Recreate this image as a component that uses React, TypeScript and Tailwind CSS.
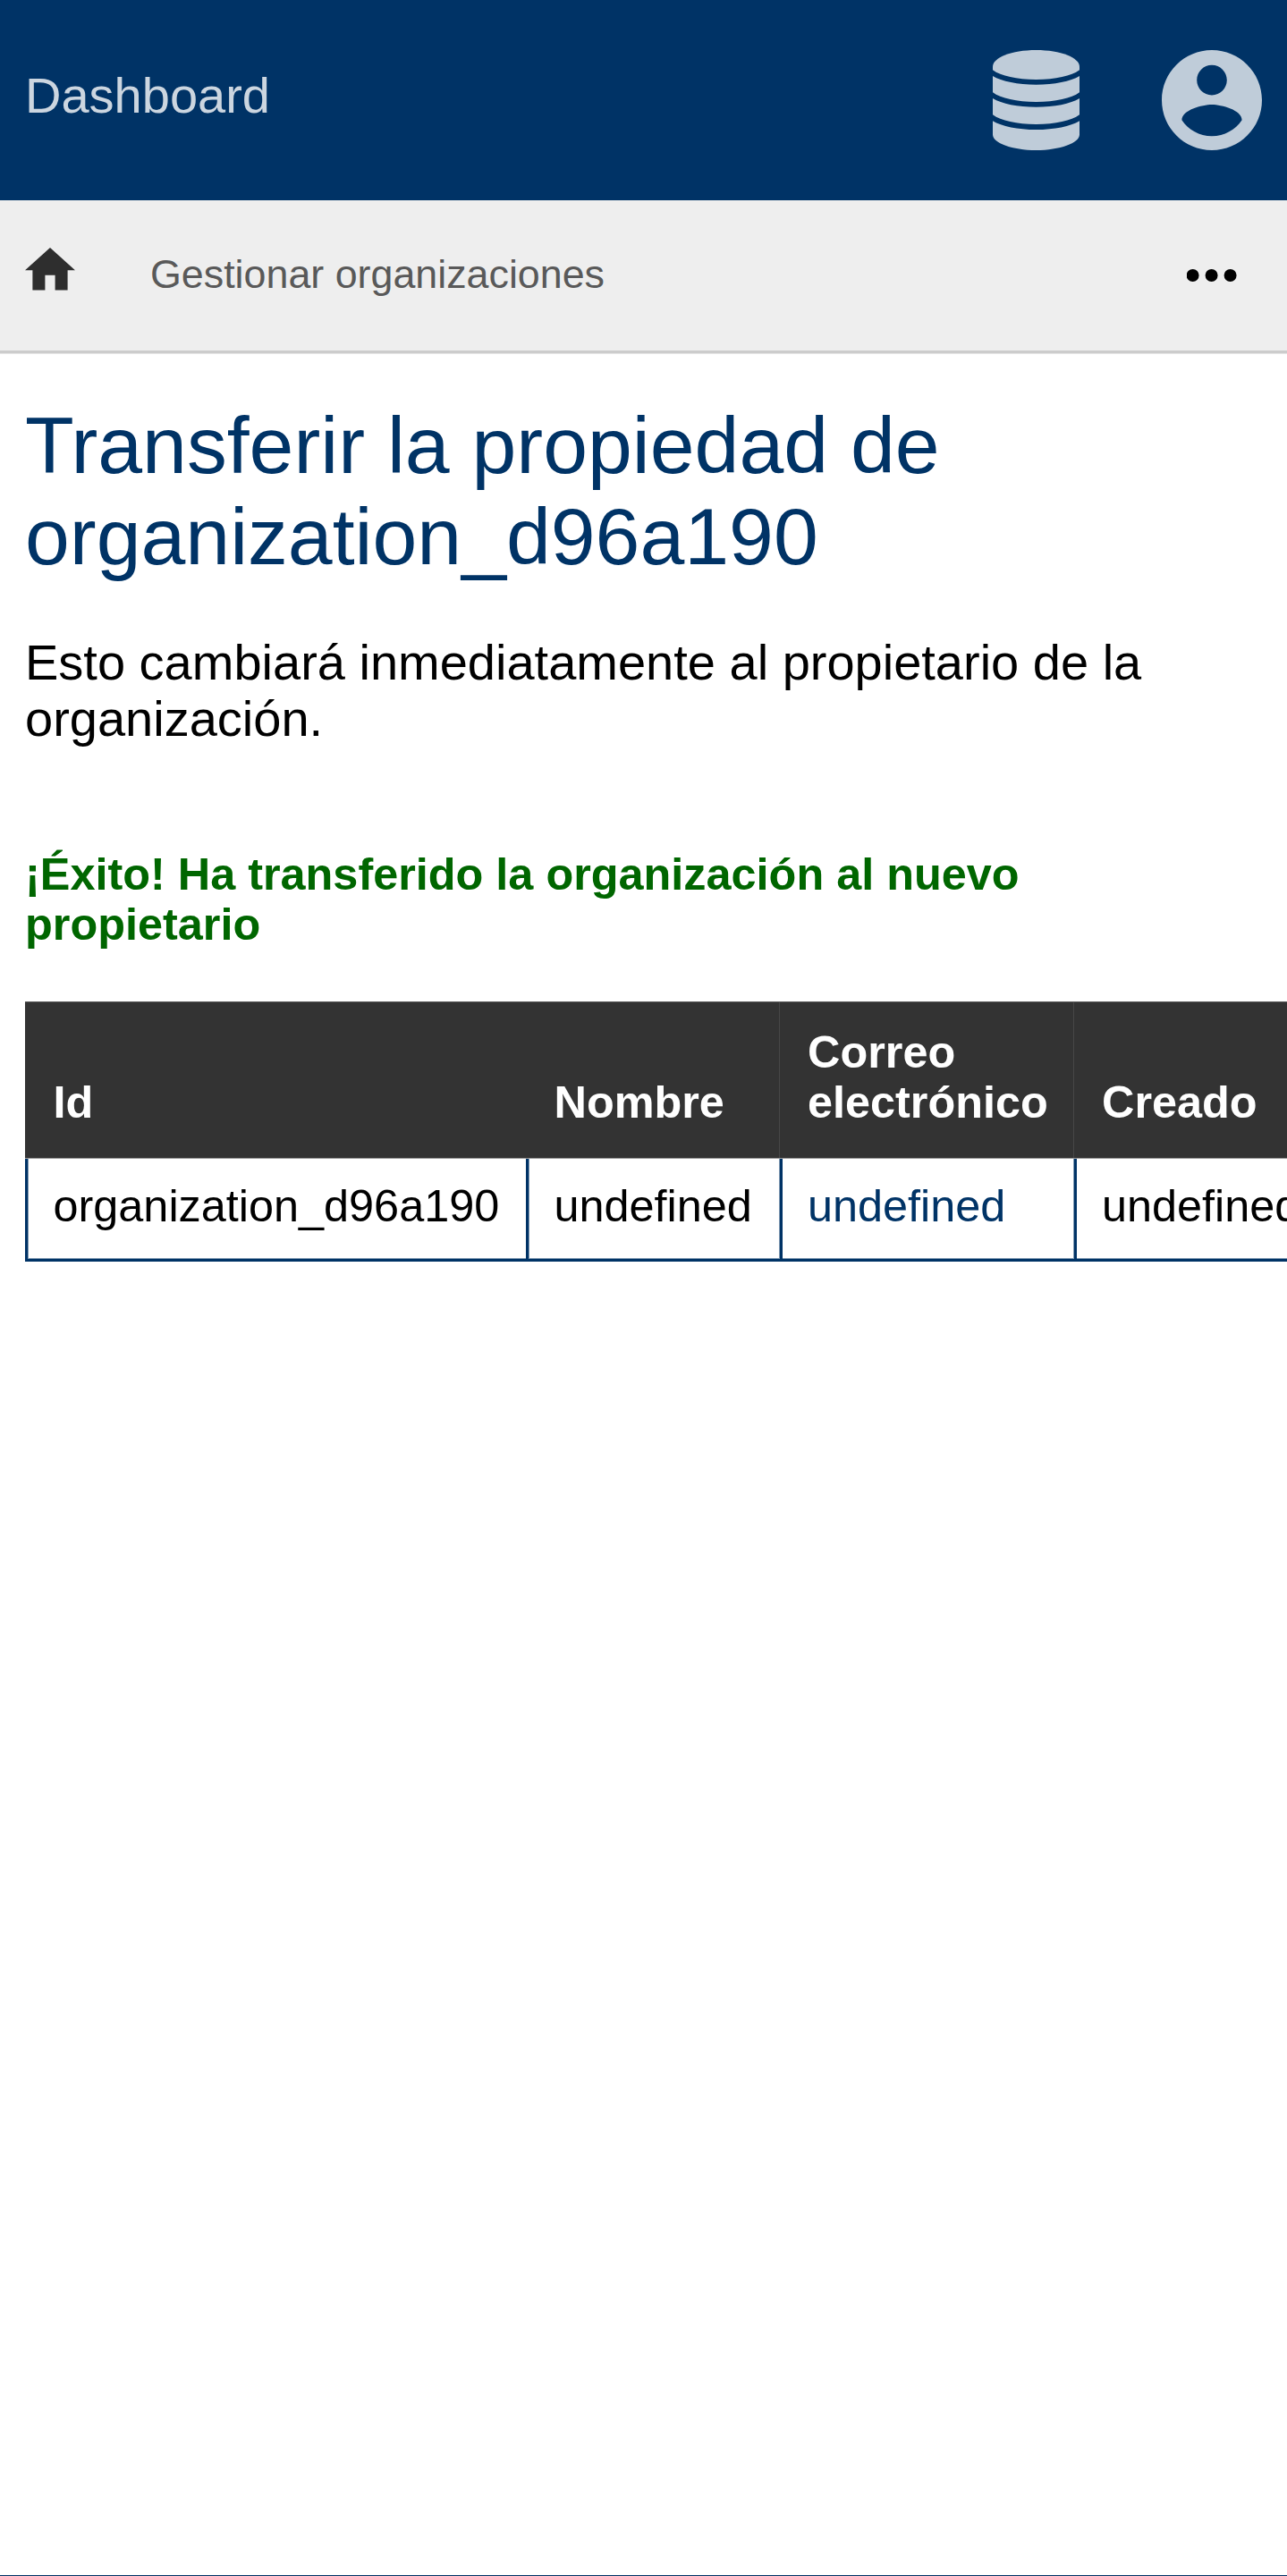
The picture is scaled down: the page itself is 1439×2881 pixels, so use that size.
const columns = [
  {
    title: "Id",
    value: "organization_d96a190",
    th: "shadow-[inset_0_1px_0_#5b5b5b,inset_0_-1px_0_#999999] pl-[31.5px]",
    td: "shadow-[inset_0_-3px_0_#003366,inset_3px_0_0_#003366,inset_0_-4px_0_#7f99b2,inset_4px_0_0_#7f99b2] pl-[31.5px]",
  },
  {
    title: "Nombre",
    value: "undefined",
    th: "shadow-[inset_0_1px_0_#5b5b5b,inset_0_-1px_0_#999999] pl-[31.5px]",
    td: "shadow-[inset_0_-3px_0_#003366,inset_3px_0_0_#003366,inset_0_-4px_0_#7f99b2,inset_4px_0_0_#7f99b2] pl-[31.5px]",
  },
  {
    title: "Correo electrónico",
    value: "undefined",
    th: "shadow-[inset_0_1px_0_#5b5b5b,inset_0_-1px_0_#999999,inset_1px_0_0_#474747] pl-[32px]",
    td: "shadow-[inset_0_-3px_0_#003366,inset_1px_0_0_#7f99b2,inset_4px_0_0_#003366,inset_0_-4px_0_#7f99b2] pl-[32px] text-[#003366]",
  },
  {
    title: "Creado",
    value: "undefined",
    th: "shadow-[inset_0_1px_0_#5b5b5b,inset_0_-1px_0_#999999,inset_1px_0_0_#474747] pl-[32px]",
    td: "shadow-[inset_0_-3px_0_#003366,inset_1px_0_0_#7f99b2,inset_4px_0_0_#003366,inset_0_-4px_0_#7f99b2] pl-[32px]",
  },
];

function DatabaseIcon() {
  return (
    <svg className="h-[112px] w-[97px]" viewBox="0 0 97 112" fill="currentColor">
      <path d="M0 18.5C0 8.5 21 0 48.5 0S97 8.5 97 18.5V22.3C88 29 70 33 48.5 33S9 29 0 22.3Z" />
      <path d="M0 29C10 35 28 38.7 48.5 38.7S87 35 97 29V47.3C88 54 70 58 48.5 58S9 54 0 47.3Z" />
      <path d="M0 54C10 60 28 63.8 48.5 63.8S87 60 97 54V72.3C88 79 70 83 48.5 83S9 79 0 72.3Z" />
      <path d="M0 79.2C10 85.2 28 89 48.5 89S87 85.2 97 79.2V94.5C97 104 75 112 48.5 112S0 104 0 94.5Z" />
    </svg>
  );
}

function AccountIcon() {
  return (
    <svg className="size-[112px]" viewBox="2 2 20 20" fill="currentColor">
      <path d="M12 2C6.48 2 2 6.48 2 12s4.48 10 10 10 10-4.48 10-10S17.52 2 12 2zm0 3c1.66 0 3 1.34 3 3s-1.34 3-3 3-3-1.34-3-3 1.34-3 3-3zm0 14.2c-2.5 0-4.71-1.28-6-3.22.03-1.99 4-3.08 6-3.08 1.99 0 5.97 1.09 6 3.08-1.29 1.94-3.5 3.22-6 3.22z" />
    </svg>
  );
}

export default function App() {
  return (
    <div className="flex h-[2881px] w-full flex-col overflow-hidden border-b border-[#003366] bg-white font-['Liberation_Sans',Arial,sans-serif] text-black">
      <header className="flex h-[224px] shrink-0 items-center justify-between bg-[#003366] pr-[28.5px] pl-7">
        <a className="-mt-[11px] text-[56px] leading-[63px] text-[#ccd6e0]">Dashboard</a>
        <div className="flex gap-[92px] text-[#bfccd9]">
          <DatabaseIcon />
          <AccountIcon />
        </div>
      </header>

      <nav className="flex h-[168px] shrink-0 items-start bg-[#eeeeee] pt-[53px] pl-7">
        <svg className="h-[48px] w-[56px]" viewBox="2 3 20 17.143" fill="#2e2e2e">
          <path d="M10 20v-6h4v6h5v-8h3L12 3 2 12h3v8z" />
        </svg>
        <a className="ml-[84px] pt-[3px] text-[44.8px] leading-[52px] text-[#595959]">Gestionar organizaciones</a>
        <svg className="mt-[24px] mr-[56px] ml-auto h-[14px] w-[56px]" viewBox="0.4 0 56 14">
          <circle cx="7" cy="7" r="7" />
          <circle cx="28" cy="7" r="7" />
          <circle cx="49" cy="7" r="7" />
        </svg>
      </nav>
      <div className="h-[4px] shrink-0 border-b border-[#e5e5e5] bg-[#cccccc]" />

      <main className="pt-[51px] pl-7">
        <h1 className="w-[1383px] text-[89.6px] leading-[102px] text-[#003366]">
          Transferir la propiedad de organization_d96a190
        </h1>
        <p className="mt-[58px] w-[1383px] text-[56px] leading-[63px]">
          Esto cambiará inmediatamente al propietario de la organización.
        </p>
        <p className="mt-[115px] w-[1383px] text-[50.4px] leading-[56px] font-bold text-[#006600]">
          ¡Éxito! Ha transferido la organización al nuevo propietario
        </p>
        <table className="mt-[58px] w-[1503px] table-fixed border-separate border-spacing-0 text-left text-[50.4px]">
          <colgroup>
            <col className="w-[560px]" />
            <col className="w-[283px]" />
            <col className="w-[329px]" />
            <col className="w-[331px]" />
          </colgroup>
          <thead>
            <tr className="h-[176px] bg-[#333333] leading-[56px] text-white">
              {columns.map((c) => (
                <th key={c.title} className={`${c.th} pb-[35px] align-bottom font-bold`}>
                  {c.title}
                </th>
              ))}
            </tr>
          </thead>
          <tbody>
            <tr className="h-[115px] leading-[57px]">
              {columns.map((c) => (
                <td key={c.title} className={`${c.td} pt-[24px] align-top`}>
                  {c.value}
                </td>
              ))}
            </tr>
          </tbody>
        </table>
      </main>
    </div>
  );
}
